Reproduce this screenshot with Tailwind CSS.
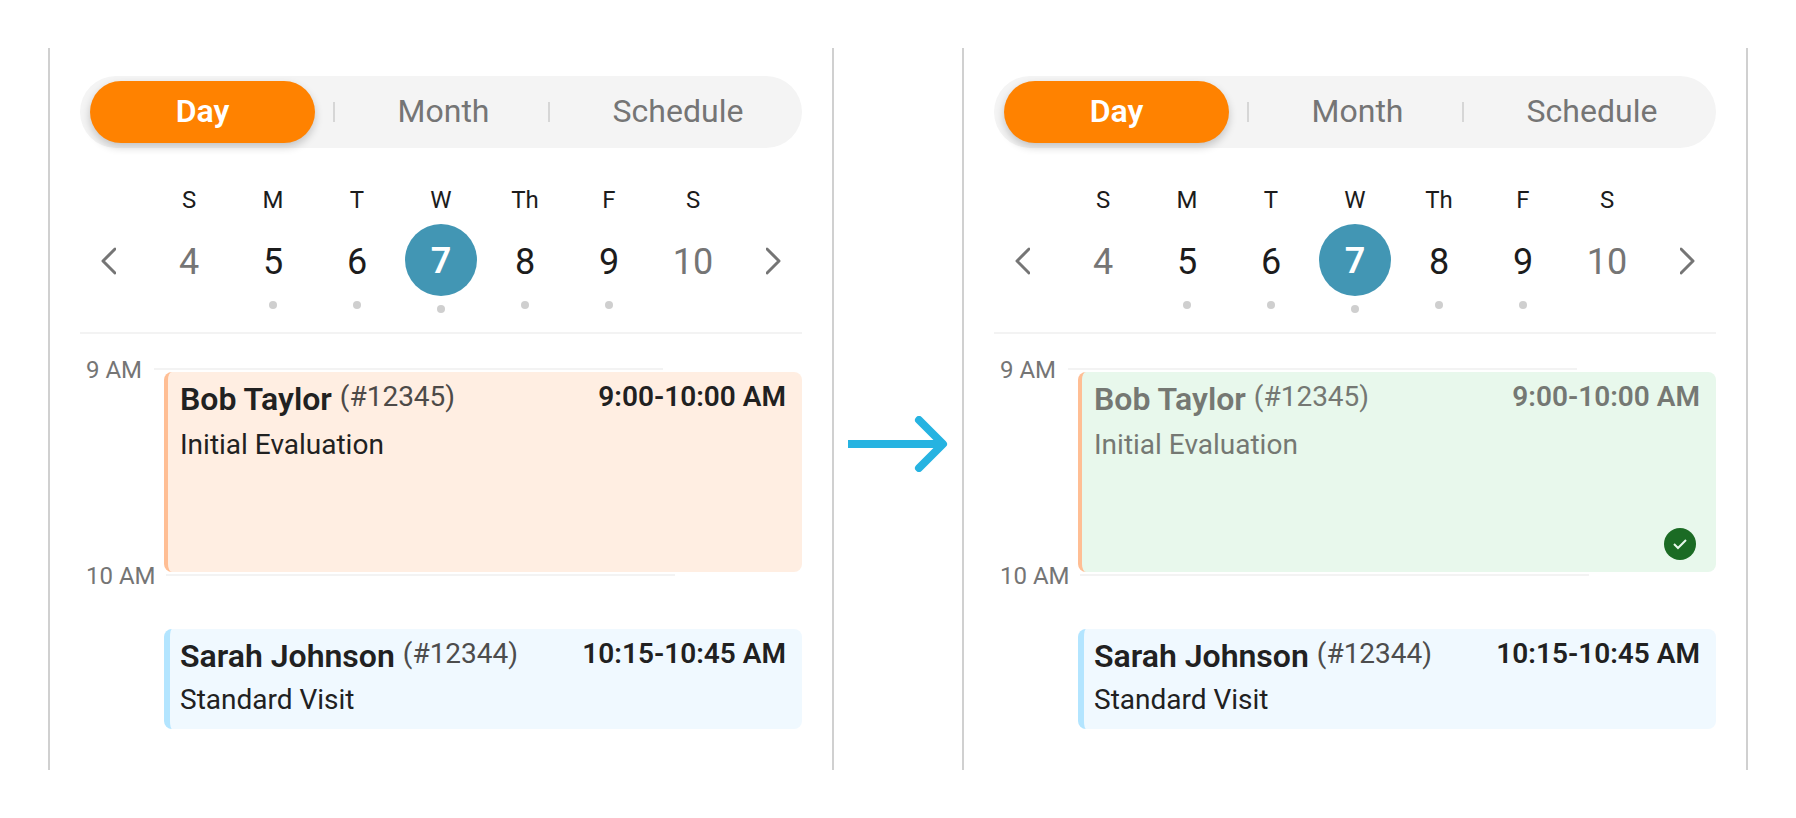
<!DOCTYPE html>
<html lang="en">
<head>
    <meta charset="UTF-8">
    <meta name="viewport" content="width=device-width, initial-scale=1.0">
    <title>Day View</title>
    <script src="https://cdn.jsdelivr.net/npm/@tailwindcss/browser@4"></script>
    <script>
        const days = [
            { label: "S", date: 4, muted: true },
            { label: "M", date: 5, dot: true },
            { label: "T", date: 6, dot: true },
            { label: "W", date: 7, dot: true, selected: true },
            { label: "Th", date: 8, dot: true },
            { label: "F", date: 9, dot: true },
            { label: "S", date: 10, muted: true }
        ];

        function renderDay(day) {
            const color = day.muted ? "text-[#757575]" : "text-[#1c1c1c]";
            const button = day.selected
                ? `<button class="size-[72px] rounded-full bg-[#4296b4] pt-[2px] text-4xl font-semibold text-white" aria-pressed="true">${day.date}</button>`
                : `<button class="h-[76px] w-[72px] text-4xl ${color}">${day.date}</button>`;
            const dot = day.dot
                ? `<span class="size-2 rounded-full bg-[#cfcfcf] ${day.selected ? "mt-[9px]" : "mt-px"}"></span>`
                : "";

            return `
                <div class="flex flex-col items-center">
                    <span class="mb-[10px] text-2xl leading-7 text-[#1c1c1c]">${day.label}</span>
                    ${button}
                    ${dot}
                </div>
            `;
        }

        document.addEventListener("DOMContentLoaded", () => {
            document.querySelectorAll(".week").forEach(week => {
                week.innerHTML = days.map(renderDay).join("");
            });
        });
    </script>
</head>
<body class="bg-white p-12 font-['Roboto',sans-serif]">
    <main class="grid grid-cols-[1fr_128px_1fr]">

        <!-- Before the visit is completed -->
        <section class="border-x-2 border-[#d0d0d0] px-[30px] pt-7 pb-[41px]">
            <nav class="grid h-[72px] grid-cols-[225fr_20px_213fr_2px_252fr] items-center rounded-full bg-[#f4f4f4] pl-[10px] text-[32px] text-[#757575]">
                <button class="h-[62px] rounded-full bg-[#ff8200] pb-[2px] font-semibold text-white shadow-[0_4px_8px_rgba(0,0,0,0.2)]">Day</button>
                <span class="ml-[18px] h-5 w-[2px] bg-[#d6d6d6]"></span>
                <button class="pb-[2px] pl-1">Month</button>
                <span class="h-5 w-[2px] bg-[#d6d6d6]"></span>
                <button class="pb-[2px] pl-1">Schedule</button>
            </nav>

            <div class="mt-[38px] flex items-start justify-between px-5">
                <button class="mt-[61px]" aria-label="Previous week">
                    <svg class="h-7 w-4" viewBox="0 0 16 28" fill="none" stroke="#757575" stroke-width="3" stroke-linecap="round" stroke-linejoin="round"><path d="M15 2 3 14l12 12"/></svg>
                </button>
                <div class="week grid w-[588px] grid-cols-7"></div>
                <button class="mt-[61px]" aria-label="Next week">
                    <svg class="h-7 w-4" viewBox="0 0 16 28" fill="none" stroke="#757575" stroke-width="3" stroke-linecap="round" stroke-linejoin="round"><path d="m1 2 12 12L1 26"/></svg>
                </button>
            </div>

            <hr class="mt-[19px] border-t-2 border-[#f3f3f3]">

            <!-- Hour lines and events share one grid cell -->
            <div class="mt-5 grid">
                <div class="col-start-1 row-start-1 flex flex-col gap-[176px] pl-[6px] text-2xl leading-7 text-[#757575]">
                    <div class="flex items-center gap-3"><span class="pt-[2px]">9 AM</span><span class="h-[2px] w-[509px] bg-[#f3f3f3]"></span></div>
                    <div class="flex items-center gap-[10px]"><span class="pt-[2px]">10 AM</span><span class="h-[2px] w-[509px] bg-[#f3f3f3]"></span></div>
                </div>
                <div class="col-start-1 row-start-1 ml-[84px] flex flex-col gap-[57px] pt-[18px] text-[28px] leading-9 text-[#212121]">
                    <article class="h-[200px] rounded-lg border-l-4 border-[#ffbe94] bg-[#ffeee2] pt-[7px] pr-4 pl-3">
                        <div class="flex items-start">
                            <h2 class="text-[32px] leading-10 font-semibold">Bob Taylor</h2>
                            <span class="ml-2 text-[#4d4a48]">(#12345)</span>
                            <time class="ml-auto font-semibold">9:00-10:00 AM</time>
                        </div>
                        <p class="mt-2">Initial Evaluation</p>
                    </article>
                    <article class="h-[100px] rounded-lg border-l-[6px] border-[#b3e5ff] bg-[#f0f9ff] pt-[7px] pr-4 pl-[10px]">
                        <div class="flex items-start">
                            <h2 class="text-[32px] leading-10 font-semibold">Sarah Johnson</h2>
                            <span class="ml-2 text-[#4d4d4d]">(#12344)</span>
                            <time class="ml-auto font-semibold">10:15-10:45 AM</time>
                        </div>
                        <p class="mt-[6px]">Standard Visit</p>
                    </article>
                </div>
            </div>
        </section>

        <svg class="mt-[368px] h-14 w-[100px] justify-self-center" viewBox="0 0 100 56" fill="none" stroke="#26b3e1" stroke-width="8" stroke-linejoin="round"><path d="M0 28h94"/><path d="m71 4 24 24-24 24" stroke-linecap="round"/></svg>

        <!-- After the visit is completed -->
        <section class="border-x-2 border-[#d0d0d0] px-[30px] pt-7 pb-[41px]">
            <nav class="grid h-[72px] grid-cols-[225fr_20px_213fr_2px_252fr] items-center rounded-full bg-[#f4f4f4] pl-[10px] text-[32px] text-[#757575]">
                <button class="h-[62px] rounded-full bg-[#ff8200] pb-[2px] font-semibold text-white shadow-[0_4px_8px_rgba(0,0,0,0.2)]">Day</button>
                <span class="ml-[18px] h-5 w-[2px] bg-[#d6d6d6]"></span>
                <button class="pb-[2px] pl-1">Month</button>
                <span class="h-5 w-[2px] bg-[#d6d6d6]"></span>
                <button class="pb-[2px] pl-1">Schedule</button>
            </nav>

            <div class="mt-[38px] flex items-start justify-between px-5">
                <button class="mt-[61px]" aria-label="Previous week">
                    <svg class="h-7 w-4" viewBox="0 0 16 28" fill="none" stroke="#757575" stroke-width="3" stroke-linecap="round" stroke-linejoin="round"><path d="M15 2 3 14l12 12"/></svg>
                </button>
                <div class="week grid w-[588px] grid-cols-7"></div>
                <button class="mt-[61px]" aria-label="Next week">
                    <svg class="h-7 w-4" viewBox="0 0 16 28" fill="none" stroke="#757575" stroke-width="3" stroke-linecap="round" stroke-linejoin="round"><path d="m1 2 12 12L1 26"/></svg>
                </button>
            </div>

            <hr class="mt-[19px] border-t-2 border-[#f3f3f3]">

            <div class="mt-5 grid">
                <div class="col-start-1 row-start-1 flex flex-col gap-[176px] pl-[6px] text-2xl leading-7 text-[#757575]">
                    <div class="flex items-center gap-3"><span class="pt-[2px]">9 AM</span><span class="h-[2px] w-[509px] bg-[#f3f3f3]"></span></div>
                    <div class="flex items-center gap-[10px]"><span class="pt-[2px]">10 AM</span><span class="h-[2px] w-[509px] bg-[#f3f3f3]"></span></div>
                </div>
                <div class="col-start-1 row-start-1 ml-[84px] flex flex-col gap-[57px] pt-[18px] text-[28px] leading-9 text-[#212121]">
                    <article class="flex h-[200px] flex-col rounded-lg border-l-4 border-[#ffbe94] bg-[#e8f8ec] pt-[7px] pr-4 pb-3 pl-3 text-[#757873]">
                        <div class="flex items-start">
                            <h2 class="text-[32px] leading-10 font-semibold">Bob Taylor</h2>
                            <span class="ml-2">(#12345)</span>
                            <time class="ml-auto font-semibold">9:00-10:00 AM</time>
                        </div>
                        <p class="mt-2">Initial Evaluation</p>
                        <svg class="mt-auto mr-1 size-8 self-end" viewBox="0 0 32 32" fill="none"><circle cx="16" cy="16" r="16" fill="#1b6b24"/><path d="m10 16 4 4 8-8" stroke="#e8f8ec" stroke-width="2"/></svg>
                    </article>
                    <article class="h-[100px] rounded-lg border-l-[6px] border-[#b3e5ff] bg-[#f0f9ff] pt-[7px] pr-4 pl-[10px]">
                        <div class="flex items-start">
                            <h2 class="text-[32px] leading-10 font-semibold">Sarah Johnson</h2>
                            <span class="ml-2 text-[#4d4d4d]">(#12344)</span>
                            <time class="ml-auto font-semibold">10:15-10:45 AM</time>
                        </div>
                        <p class="mt-[6px]">Standard Visit</p>
                    </article>
                </div>
            </div>
        </section>
    </main>
</body>
</html>
